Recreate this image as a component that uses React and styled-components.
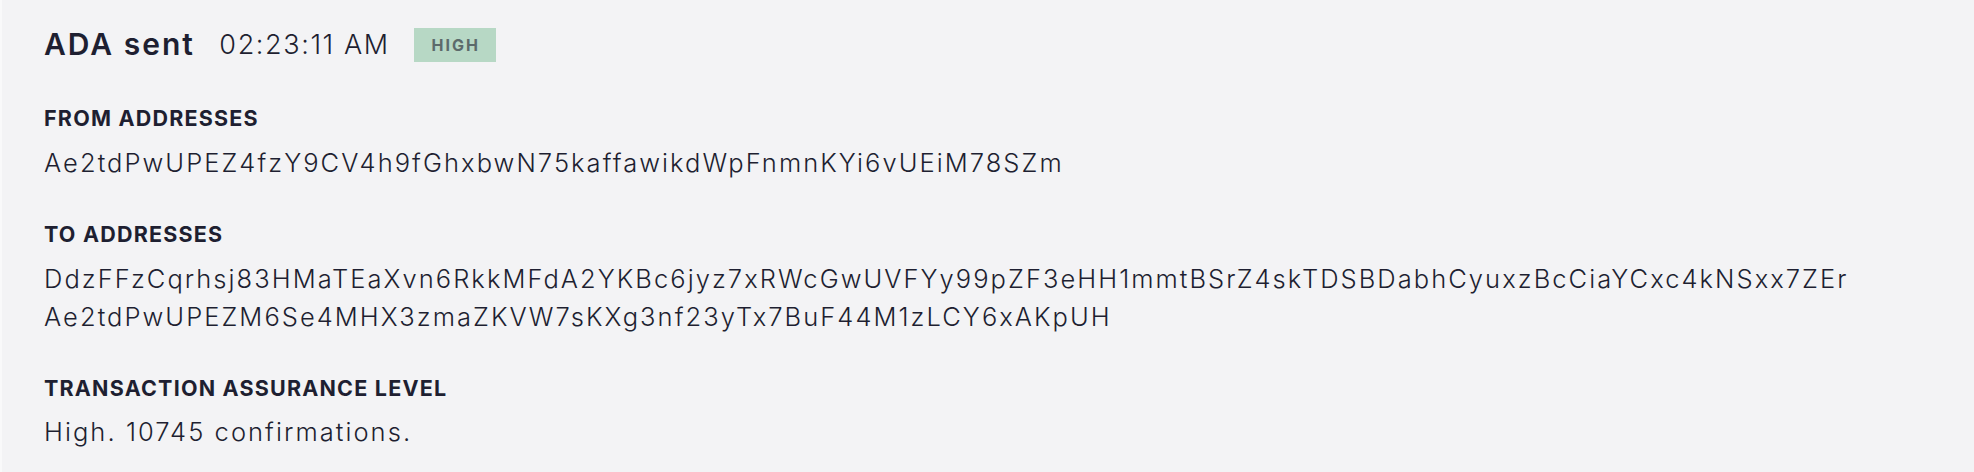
import React from "react";
import styled, { createGlobalStyle } from "styled-components";

const GlobalStyle = createGlobalStyle`
  html, body {
    margin: 0;
    padding: 0;
    background: #f3f3f5;
  }
  body {
    font-family: Inter, "Noto Sans", sans-serif;
    color: #1e1f31;
  }
`;

const Details = styled.div`
  box-sizing: border-box;
  width: 1974px;
  height: 472px;
  padding: 22px 42px 0;
  border-left: 2px solid #f9f9fa;
  background: #f3f3f5;
`;

const Header = styled.div`
  display: flex;
  align-items: center;
  height: 45px;
`;

const Title = styled.h2`
  margin: 0;
  font-size: 30px;
  font-weight: 600;
  letter-spacing: 2px;
  line-height: 45px;
`;

const Time = styled.span`
  margin-left: 24.5px;
  font-size: 27px;
  font-weight: 300;
  letter-spacing: 1.6px;
`;

const Badge = styled.span`
  margin-left: 24px;
  display: inline-flex;
  align-items: center;
  justify-content: center;
  width: 82px;
  height: 34px;
  padding-left: 2px;
  box-sizing: border-box;
  background: #b7d8c5;
  color: #5c6a6b;
  font-size: 16px;
  font-weight: 700;
  letter-spacing: 2px;
`;

const Section = styled.section`
  margin-top: ${(p) => p.$gap}px;
`;

const Label = styled.h3`
  margin: 0;
  font-size: 21.5px;
  font-weight: 700;
  letter-spacing: 1.2px;
  line-height: 26px;
`;

const Value = styled.div`
  margin-top: ${(p) => p.$gap || 13}px;
  font-size: 25.5px;
  font-weight: 300;
  letter-spacing: 2.05px;
  line-height: 38px;
  white-space: nowrap;
`;

const fromAddresses = ["Ae2tdPwUPEZ4fzY9CV4h9fGhxbwN75kaffawikdWpFnmnKYi6vUEiM78SZm"];
const toAddresses = [
  "DdzFFzCqrhsj83HMaTEaXvn6RkkMFdA2YKBc6jyz7xRWcGwUVFYy99pZF3eHH1mmtBSrZ4skTDSBDabhCyuxzBcCiaYCxc4kNSxx7ZEr",
  "Ae2tdPwUPEZM6Se4MHX3zmaZKVW7sKXg3nf23yTx7BuF44M1zLCY6xAKpUH",
];

export default function App() {
  return (
    <>
      <GlobalStyle />
      <Details>
        <Header>
          <Title>ADA sent</Title>
          <Time>02:23:11 AM</Time>
          <Badge>HIGH</Badge>
        </Header>

        <Section $gap={38}>
          <Label>FROM ADDRESSES</Label>
          <Value>
            {fromAddresses.map((a) => (
              <div key={a}>{a}</div>
            ))}
          </Value>
        </Section>

        <Section $gap={39}>
          <Label>TO ADDRESSES</Label>
          <Value>
            {toAddresses.map((a) => (
              <div key={a}>{a}</div>
            ))}
          </Value>
        </Section>

        <Section $gap={39}>
          <Label>TRANSACTION ASSURANCE LEVEL</Label>
          <Value $gap={12}>High. 10745 confirmations.</Value>
        </Section>
      </Details>
    </>
  );
}
